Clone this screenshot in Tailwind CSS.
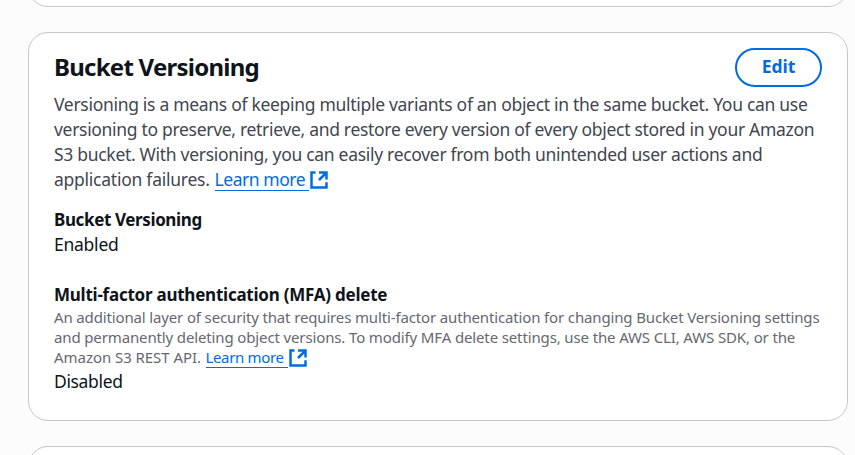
<!DOCTYPE html>
<html lang="en">
<head>
<meta charset="utf-8">
<title>Bucket Versioning</title>
<script src="https://cdn.jsdelivr.net/npm/@tailwindcss/browser@4"></script>
</head>
<body class="w-[855px] h-[455px] overflow-hidden bg-[#fcfcfd] font-['Noto_Sans',sans-serif] text-[#0f141a]">
<main class="flex flex-col gap-[25px] pl-7 pr-[7px] h-[455px] overflow-hidden">
  <section class="-mt-[60px] h-[67px] shrink-0 rounded-[20px] border border-[#c6c6cd] bg-white"></section>
  <section class="h-[389px] shrink-0 rounded-[20px] border border-[#c6c6cd] bg-white px-[25px] pt-[15px]">
    <header class="flex justify-between items-start h-[44px]">
      <h2 class="text-[24px] leading-[38px] font-bold whitespace-nowrap tracking-[-0.75px]">Bucket Versioning</h2>
      <button class="w-[87px] h-[39px] rounded-full border-2 border-[#006ce0] text-[#006ce0] text-[17.5px] font-bold leading-none tracking-[-0.1px] pb-px">Edit</button>
    </header>
    <div class="text-[17.5px] leading-[25px] text-[#424650] whitespace-nowrap tracking-[-0.302px]">
      <p>Versioning is a means of keeping multiple variants of an object in the same bucket. You can use</p>
      <p class="tracking-[-0.31px]">versioning to preserve, retrieve, and restore every version of every object stored in your Amazon</p>
      <p>S3 bucket. With versioning, you can easily recover from both unintended user actions and</p>
      <div class="flex h-[25px]">
        <p class="w-[160.5px] tracking-[-0.25px]">application failures.</p>
        <a class="flex text-[#006ce0] tracking-[-0.45px]"><span class="block w-[94.5px] h-[24px] border-b border-[#006ce0]">Learn more</span><svg class="mt-[3px] size-5 shrink-0" viewBox="0 0 16 16" fill="none" stroke="currentColor" stroke-width="2"><path d="M8 2h6v5.5M8 8l6-6M14 9.8V14H2V2h3.2"/></svg></a>
      </div>
    </div>
    <h3 class="mt-[15px] text-[17px] leading-[25px] font-bold tracking-[-0.38px]">Bucket Versioning</h3>
    <p class="text-[17.5px] leading-[25px] tracking-[-0.25px]">Enabled</p>
    <h3 class="mt-[25px] text-[17px] leading-[25px] font-bold tracking-[-0.24px]">Multi-factor authentication (MFA) delete</h3>
    <div class="text-[15px] leading-[20px] text-[#656871] whitespace-nowrap tracking-[-0.145px]">
      <p>An additional layer of security that requires multi-factor authentication for changing Bucket Versioning settings</p>
      <p class="tracking-[-0.133px]">and permanently deleting object versions. To modify MFA delete settings, use the AWS CLI, AWS SDK, or the</p>
      <div class="flex h-[22px]">
        <p class="w-[151.5px] tracking-[-0.05px]">Amazon S3 REST API.</p>
        <a class="flex text-[#006ce0] tracking-[-0.35px]"><span class="block w-[82.5px] h-[21px] border-b border-[#006ce0]">Learn more</span><svg class="mt-px size-5 shrink-0" viewBox="0 0 16 16" fill="none" stroke="currentColor" stroke-width="2"><path d="M8 2h6v5.5M8 8l6-6M14 9.8V14H2V2h3.2"/></svg></a>
      </div>
    </div>
    <p class="text-[17.5px] leading-[25px] tracking-[-0.35px]">Disabled</p>
  </section>
  <section class="h-20 shrink-0 rounded-[20px] border border-[#c6c6cd] bg-white"></section>
</main>
</body>
</html>
